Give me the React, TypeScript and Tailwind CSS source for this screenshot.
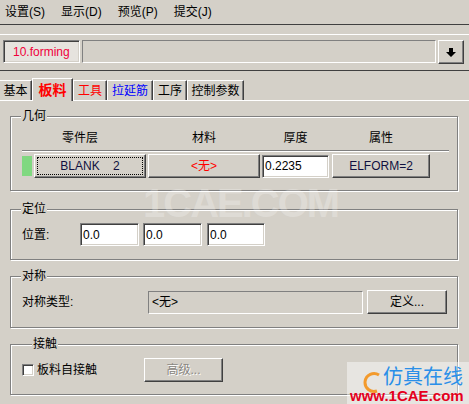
import type { ReactNode } from 'react'

const raised =
  'border border-t-white border-l-white border-b-[#404040] border-r-[#404040] shadow-[inset_-1px_-1px_0_#808080]'
const sunken =
  'border border-t-[#808080] border-l-[#808080] border-b-white border-r-white shadow-[inset_1px_1px_0_#404040,inset_-1px_-1px_0_#d4d0c8]'

function Group({
  label,
  labelClass = 'left-[10px]',
  className = '',
  children,
}: {
  label: string
  labelClass?: string
  className?: string
  children: ReactNode
}) {
  return (
    <div
      className={`relative ml-[10px] w-[448px] border border-[#808080] shadow-[inset_1px_1px_0_#fff,1px_1px_0_#fff] ${className}`}
    >
      <span className={`absolute -top-[9px] ${labelClass} bg-[#d4d0c8] px-[1px] text-[12px] leading-[16px]`}>
        {label}
      </span>
      {children}
    </div>
  )
}

function Tab({ label, width, className = '' }: { label: string; width: string; className?: string }) {
  return (
    <div
      className={`${width} h-[20px] flex items-center justify-center border-l border-t border-white border-r border-r-[#404040] shadow-[inset_-1px_0_0_#808080] text-[12px] ${className}`}
    >
      {label}
    </div>
  )
}

export default function App() {
  const font = "font-['Liberation_Sans','Noto_Sans_CJK_SC',sans-serif]"

  return (
    <div className={`relative w-[469px] h-[404px] overflow-hidden bg-[#d4d0c8] text-black ${font}`}>
      {/* menu bar */}
      <div className="h-[25px] flex items-center gap-4 px-[5px] border-b border-[#404040] text-[12px]">
        <span>设置(S)</span>
        <span>显示(D)</span>
        <span>预览(P)</span>
        <span>提交(J)</span>
      </div>
      <div className="mt-[9px] h-px bg-white" />

      {/* stage combo */}
      <div className="mt-[5px] flex px-[3px]">
        <div className={`w-[77px] h-[23px] flex items-center pl-[9px] text-[12px] text-[#f0003a] bg-[#e6e3de] ${sunken}`}>
          10.forming
        </div>
        <div className="ml-[2px] w-[354px] h-[23px] border border-t-[#808080] border-l-[#808080] border-b-white border-r-white" />
        <div className={`ml-[2px] w-[26px] h-[24px] flex items-center justify-center ${raised}`}>
          <svg width="10" height="9" viewBox="0 0 10 9">
            <path d="M3 0h4v4h3l-5 5-5-5h3z" fill="#000" />
          </svg>
        </div>
      </div>
      <div className="mt-[6px] h-px bg-[#404040]" />

      {/* tabs */}
      <div className="mt-[7px] h-[23px] flex items-end border-b border-white">
        <Tab label="基本" width="w-[32px]" className="border-l-0" />
        <div className="relative -mb-px w-[41px] h-[23px] flex items-center justify-center bg-[#d4d0c8] border-l border-t border-white border-r border-r-[#404040] shadow-[inset_-1px_0_0_#808080] text-[14px] font-bold text-[#ff0000]">
          板料
        </div>
        <Tab label="工具" width="w-[34px]" className="text-[#ff0000]" />
        <Tab label="拉延筋" width="w-[46px]" className="text-[#0000ff]" />
        <Tab label="工序" width="w-[34px]" />
        <Tab label="控制参数" width="w-[57px]" />
      </div>

      {/* geometry */}
      <Group label="几何" className="mt-[15px] h-[75px]">
        <div className="mt-[13px] h-[16px] flex pl-[11px] text-[12px] leading-[16px]">
          <div className="w-[116px] text-center">零件层</div>
          <div className="ml-[10px] w-[112px] text-center">材料</div>
          <div className="ml-[2px] w-[67px] text-center">厚度</div>
          <div className="ml-[3px] w-[98px] text-center">属性</div>
        </div>
        <div className="mt-[4px] ml-[11px] mr-[8px] h-[2px] border-t border-t-[#808080] border-b border-b-white" />
        <div className="mt-[2px] flex items-center pl-[11px] text-[12px]">
          <div className="w-[10px] h-[20px] bg-[#80d880]" />
          <div className={`ml-[2px] w-[112px] h-[24px] flex p-[2px] ${raised}`}>
            <div className="flex-1 flex items-center justify-center border border-dotted border-black text-[#101040] whitespace-pre">
              {'BLANK    2'}
            </div>
          </div>
          <div className={`ml-[2px] w-[112px] h-[24px] flex items-center justify-center text-[#ff0000] ${raised}`}>
            &lt;无&gt;
          </div>
          <div className={`ml-[2px] w-[67px] h-[23px] flex items-center pl-[2px] bg-white ${sunken}`}>0.2235</div>
          <div className={`ml-[3px] w-[98px] h-[24px] flex items-center justify-center text-[#101040] ${raised}`}>
            ELFORM=2
          </div>
        </div>
      </Group>

      {/* position */}
      <Group label="定位" className="mt-[18px] h-[51px]">
        <div className="mt-[13px] flex items-center pl-[11px] text-[12px]">
          <div className="w-[58px]">位置:</div>
          <div className={`w-[59px] h-[23px] flex items-center pl-[2px] bg-white ${sunken}`}>0.0</div>
          <div className={`ml-[4px] w-[59px] h-[23px] flex items-center pl-[2px] bg-white ${sunken}`}>0.0</div>
          <div className={`ml-[5px] w-[58px] h-[23px] flex items-center pl-[2px] bg-white ${sunken}`}>0.0</div>
        </div>
      </Group>

      {/* symmetry */}
      <Group label="对称" className="mt-[16px] h-[52px]">
        <div className="mt-[13px] flex items-center pl-[11px] text-[12px]">
          <div className="w-[126px]">对称类型:</div>
          <div className="w-[215px] h-[23px] flex items-center pl-[3px] border border-t-[#808080] border-l-[#808080] border-b-white border-r-white">
            &lt;无&gt;
          </div>
          <div className={`ml-[4px] w-[80px] h-[24px] flex items-center justify-center ${raised}`}>定义...</div>
        </div>
      </Group>

      {/* contact */}
      <Group label="接触" labelClass="left-[21px]" className="mt-[16px] h-[51px]">
        <div className="mt-[13px] h-[24px] flex items-center pl-[11px] text-[12px]">
          <div className="w-[122px] flex items-center">
            <span className={`w-[12px] h-[12px] bg-white ${sunken}`} />
            <span className="ml-[3px]">板料自接触</span>
          </div>
          <div className={`w-[79px] h-[24px] flex items-center justify-center text-[#8a8782] [text-shadow:1px_1px_0_#fff] ${raised}`}>
            高级...
          </div>
        </div>
      </Group>

      {/* watermark */}
      <div className="pointer-events-none absolute left-[143px] top-[181px] text-[40px] leading-[44px] font-bold tracking-[-2px] text-white/25">
        1CAE.COM
      </div>

      {/* corner logo */}
      <div className="pointer-events-none absolute right-0 bottom-0 w-[122px] h-[42px] bg-white/45">
        <svg className="absolute left-[14px] top-[9px]" width="22" height="24" viewBox="0 0 22 24">
          <path d="M18 4 A9 9 0 1 0 16 20" fill="none" stroke="#f39a2c" strokeWidth="3" />
        </svg>
        <div className="absolute left-[36px] top-[3px] text-[20px] leading-[24px] text-[#2a8fe8]">仿真在线</div>
        <div className="absolute left-[3px] top-[26px] text-[15px] leading-[15px] font-bold text-[#e5001c]">
          www.1CAE.com
        </div>
      </div>
    </div>
  )
}
